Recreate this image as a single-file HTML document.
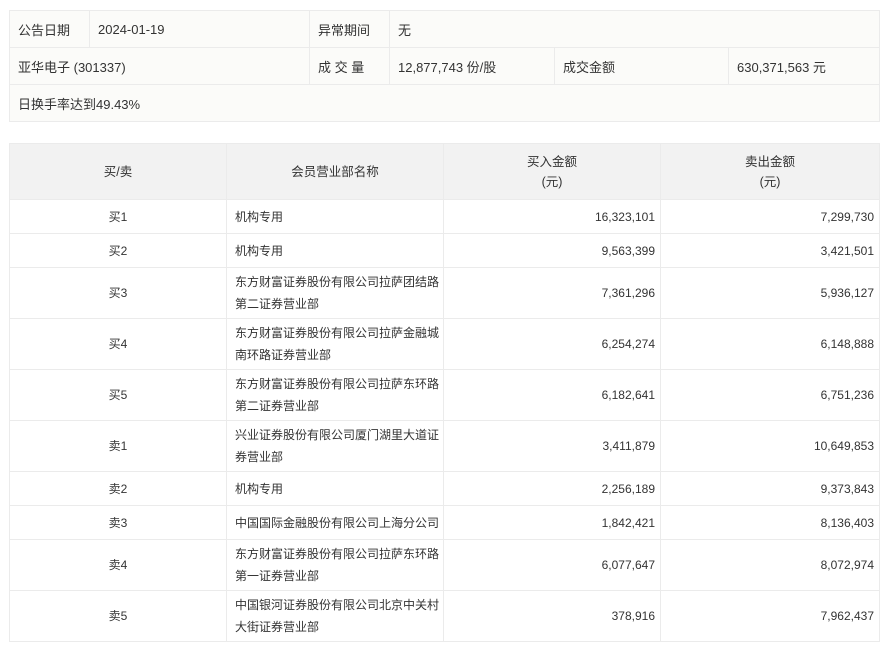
<!DOCTYPE html>
<html><head><meta charset="utf-8"><style>
body{margin:0;background:#fff;font-family:"Liberation Sans","Noto Sans CJK SC",sans-serif;font-size:12px;color:#333;}
table{border-collapse:collapse;position:absolute;left:9px;table-layout:fixed;}
td,th{border:1px solid #ebebeb;padding:0 8px;font-weight:normal;}
#t1{top:10px;width:870px;background:#fbfbf9;}
#t1 td{height:36px;font-size:13px;}
#t2{top:143px;width:870px;}
#t2 th{background:#f2f2f2;height:55px;text-align:center;line-height:20px;font-size:12.5px;}
#t2 td{line-height:22px;height:33px;}
#t2 td.n{padding:0 1px 0 8px;}
#t2 td.c{text-align:center;}
#t2 td.r{text-align:right;padding-right:5px;}
#t2 tr.t td{height:50px;}
</style></head><body>
<table id="t1">
<colgroup><col style="width:80px"><col style="width:220px"><col style="width:80px"><col style="width:165px"><col style="width:174px"><col style="width:151px"></colgroup>
<tr><td>公告日期</td><td>2024-01-19</td><td>异常期间</td><td colspan="3">无</td></tr>
<tr><td colspan="2">亚华电子 (301337)</td><td>成 交 量</td><td>12,877,743 份/股</td><td>成交金额</td><td>630,371,563 元</td></tr>
<tr><td colspan="6">日换手率达到49.43%</td></tr>
</table>
<table id="t2">
<colgroup><col style="width:217px"><col style="width:217px"><col style="width:217px"><col style="width:219px"></colgroup>
<tr><th>买/卖</th><th>会员营业部名称</th><th>买入金额<br>(元)</th><th>卖出金额<br>(元)</th></tr>
<tr><td class="c">买1</td><td class="n">机构专用</td><td class="r">16,323,101</td><td class="r">7,299,730</td></tr>
<tr><td class="c">买2</td><td class="n">机构专用</td><td class="r">9,563,399</td><td class="r">3,421,501</td></tr>
<tr class="t"><td class="c">买3</td><td class="n">东方财富证券股份有限公司拉萨团结路第二证券营业部</td><td class="r">7,361,296</td><td class="r">5,936,127</td></tr>
<tr class="t"><td class="c">买4</td><td class="n">东方财富证券股份有限公司拉萨金融城南环路证券营业部</td><td class="r">6,254,274</td><td class="r">6,148,888</td></tr>
<tr class="t"><td class="c">买5</td><td class="n">东方财富证券股份有限公司拉萨东环路第二证券营业部</td><td class="r">6,182,641</td><td class="r">6,751,236</td></tr>
<tr class="t"><td class="c">卖1</td><td class="n">兴业证券股份有限公司厦门湖里大道证券营业部</td><td class="r">3,411,879</td><td class="r">10,649,853</td></tr>
<tr><td class="c">卖2</td><td class="n">机构专用</td><td class="r">2,256,189</td><td class="r">9,373,843</td></tr>
<tr><td class="c">卖3</td><td class="n">中国国际金融股份有限公司上海分公司</td><td class="r">1,842,421</td><td class="r">8,136,403</td></tr>
<tr class="t"><td class="c">卖4</td><td class="n">东方财富证券股份有限公司拉萨东环路第一证券营业部</td><td class="r">6,077,647</td><td class="r">8,072,974</td></tr>
<tr class="t"><td class="c">卖5</td><td class="n">中国银河证券股份有限公司北京中关村大街证券营业部</td><td class="r">378,916</td><td class="r">7,962,437</td></tr>
</table>
</body></html>
